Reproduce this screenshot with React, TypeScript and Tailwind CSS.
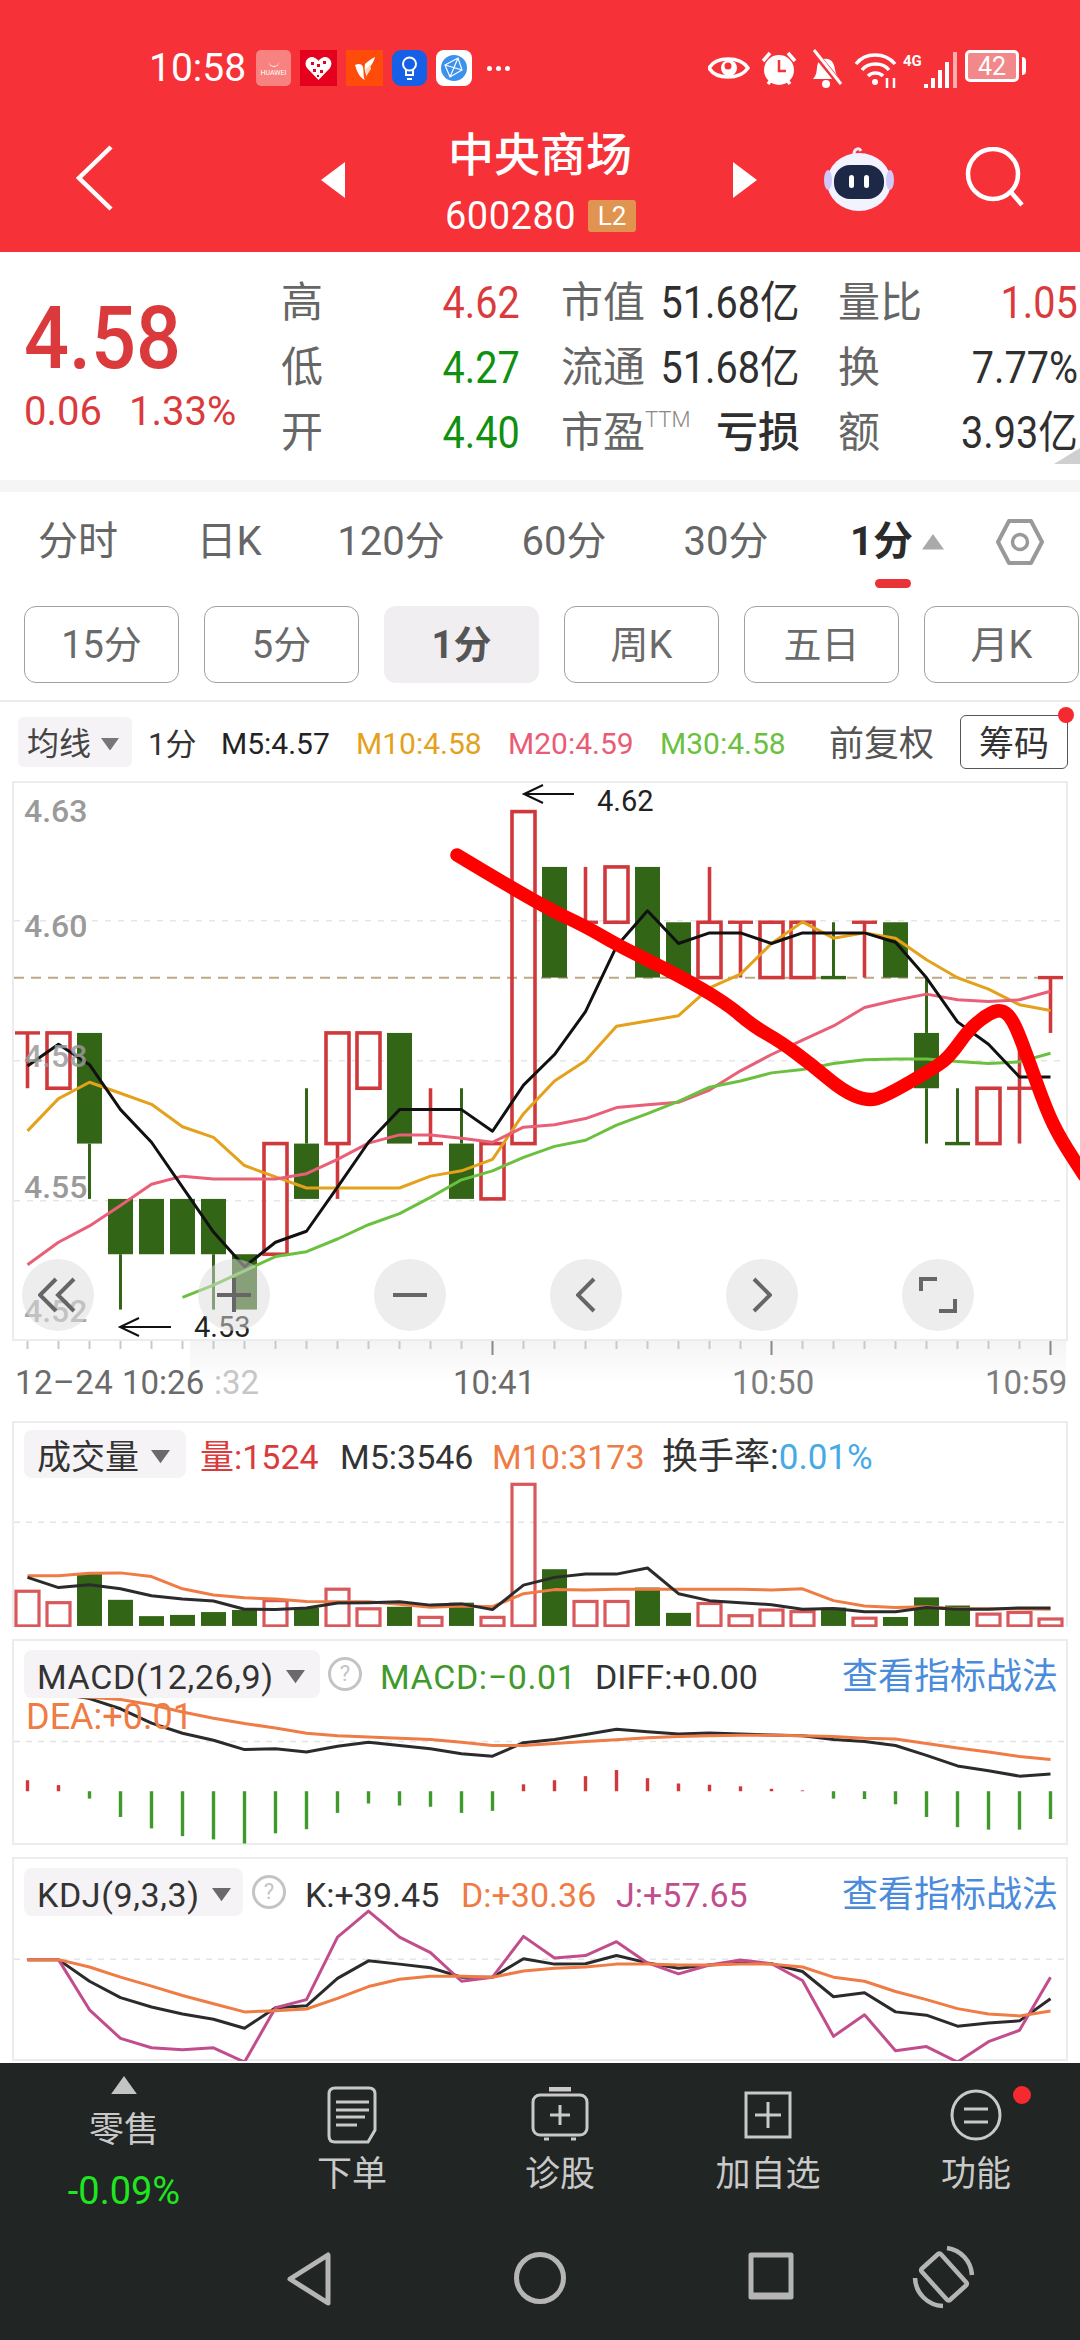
import { ReactNode } from "react";

// candle slots share one x scale across all panels
const slotX = (i: number) => 27.5 + 31 * i;
// values below are read off in "zoom units": screen y = 780 or 1420 + z / 2.45
const MAIN_TOP = 782;
const mainY = (z: number) => 780 + z / 2.45 - MAIN_TOP;
const priceY = (cents: number) => 812.6 + (462 - cents) * 55.33 - MAIN_TOP;

type Candle = [up: boolean, open: number, close: number, low: number, high: number];

const candles: Candle[] = [
  [true, 458, 458, 457, 458],
  [true, 457, 458, 457, 458],
  [false, 458, 456, 455, 458],
  [false, 455, 454, 453, 455],
  [false, 455, 454, 454, 455],
  [false, 455, 454, 454, 455],
  [false, 455, 454, 453, 455],
  [false, 454, 453, 453, 454],
  [true, 454, 456, 454, 456],
  [false, 456, 455, 455, 457],
  [true, 456, 458, 455, 458],
  [true, 457, 458, 457, 458],
  [false, 458, 456, 456, 458],
  [true, 456, 456, 456, 457],
  [false, 456, 455, 455, 457],
  [true, 455, 456, 455, 456],
  [true, 456, 462, 456, 462],
  [false, 461, 459, 459, 461],
  [true, 460, 460, 460, 461],
  [true, 460, 461, 460, 461],
  [false, 461, 459, 459, 461],
  [false, 460, 459, 459, 460],
  [true, 459, 460, 459, 461],
  [true, 460, 460, 459, 460],
  [true, 459, 460, 459, 460],
  [true, 459, 460, 459, 460],
  [false, 459, 459, 459, 460],
  [true, 460, 460, 459, 460],
  [false, 460, 459, 459, 460],
  [false, 458, 457, 456, 459],
  [false, 456, 456, 456, 457],
  [true, 456, 457, 456, 457],
  [true, 457, 457, 456, 458],
  [true, 459, 459, 458, 459],
];

const ma5 = [703, 650, 700, 810, 890, 1000, 1110, 1195, 1135, 1108, 1000, 890, 810, 810, 810, 863, 750, 675, 570, 410, 323, 403, 377, 377, 403, 377, 377, 377, 400, 487, 595, 650, 730, 730];
const ma10 = [862, 783, 743, 770, 797, 852, 878, 947, 975, 1002, 1002, 1002, 1002, 973, 960, 932, 820, 740, 690, 606, 593, 580, 512, 478, 403, 350, 390, 377, 390, 443, 487, 515, 553, 567];
const ma20 = [1190, 1135, 1095, 1045, 993, 973, 980, 980, 980, 967, 932, 892, 872, 872, 880, 890, 853, 847, 832, 805, 798, 792, 762, 715, 675, 640, 605, 560, 542, 527, 541, 545, 541, 520];
const ma30 = [1270, 1240, 1205, 1170, 1158, 1127, 1092, 1065, 1025, 982, 960, 927, 900, 885, 848, 820, 790, 755, 740, 720, 712, 697, 688, 686, 686, 692, 697, 693, 672];

const volTops: [boolean, number][] = [
  [true, 422], [true, 450], [false, 378], [false, 443], [false, 483], [false, 480], [false, 473], [false, 468], [true, 445], [false, 462], [true, 417], [true, 465], [false, 460], [true, 486], [false, 450], [true, 486], [true, 160],
  [false, 368], [true, 447], [true, 447], [false, 413], [false, 475], [true, 452], [true, 482], [true, 468], [true, 472], [false, 462], [true, 488], [false, 485], [false, 437], [false, 457], [true, 478], [true, 474], [true, 490],
];
const volBlack = [388, 413, 406, 416, 433, 441, 446, 466, 467, 463, 451, 450, 448, 456, 453, 467, 407, 388, 380, 380, 365, 428, 445, 450, 455, 466, 464, 472, 472, 462, 466, 466, 463, 463];
const volOrange = [384, 384, 378, 377, 386, 416, 431, 438, 441, 447, 448, 448, 454, 461, 458, 460, 428, 418, 419, 417, 417, 417, 417, 417, 419, 416, 445, 458, 462, 460, 465, 465, 465, 466];

const macdBars = [885, 897, 930, 975, 1003, 1022, 1030, 1040, 1015, 1005, 965, 942, 947, 950, 965, 960, 895, 885, 875, 860, 880, 893, 896, 900, 906, 910, 930, 931, 944, 975, 1000, 1006, 1006, 980];
const diffLine = [672, 672, 685, 710, 745, 770, 787, 810, 808, 816, 802, 792, 800, 808, 820, 826, 793, 785, 773, 760, 766, 772, 769, 772, 774, 776, 785, 790, 800, 824, 850, 862, 875, 870];
const deaLine = [676, 678, 682, 687, 700, 718, 733, 746, 757, 770, 776, 779, 782, 785, 792, 800, 800, 795, 790, 786, 781, 778, 776, 775, 775, 776, 778, 782, 784, 795, 806, 816, 827, 834];

const kLine = [1327, 1327, 1380, 1420, 1443, 1460, 1473, 1495, 1445, 1440, 1373, 1330, 1338, 1347, 1370, 1370, 1325, 1338, 1337, 1317, 1335, 1348, 1340, 1335, 1337, 1356, 1418, 1408, 1455, 1463, 1490, 1482, 1477, 1423];
const dLine = [1327, 1327, 1345, 1370, 1392, 1415, 1435, 1455, 1452, 1448, 1422, 1393, 1375, 1368, 1368, 1370, 1355, 1348, 1345, 1338, 1338, 1340, 1340, 1338, 1338, 1345, 1370, 1380, 1405, 1425, 1447, 1460, 1465, 1453];
const jLine = [1327, 1327, 1450, 1520, 1543, 1548, 1543, 1578, 1445, 1425, 1272, 1208, 1272, 1310, 1380, 1370, 1270, 1323, 1317, 1283, 1335, 1362, 1340, 1328, 1337, 1378, 1515, 1462, 1550, 1540, 1578, 1528, 1500, 1370];

// hand-drawn red stroke on top of the chart, in page coordinates
const scribble: [number, number][] = [
  [457, 856], [540, 906], [585, 927], [619, 947], [678, 976], [726, 1004], [753, 1027], [781, 1043], [812, 1066], [843, 1092], [867, 1102], [884, 1098], [936, 1068], [950, 1057], [970, 1029], [991, 1013], [1003, 1011], [1013, 1021], [1025, 1051], [1046, 1110], [1060, 1139], [1084, 1176],
];

function smoothPath(pts: [number, number][]) {
  let d = `M${pts[0][0]} ${pts[0][1]}`;
  for (let i = 1; i < pts.length - 1; i++) {
    const mx = (pts[i][0] + pts[i + 1][0]) / 2;
    const my = (pts[i][1] + pts[i + 1][1]) / 2;
    d += ` Q${pts[i][0]} ${pts[i][1]} ${mx} ${my}`;
  }
  const last = pts[pts.length - 1];
  return `${d} L${last[0]} ${last[1]}`;
}

function Line({ values, toY, color, start = 0, width = 3 }: { values: number[]; toY: (z: number) => number; color: string; start?: number; width?: number }) {
  const points = values.map((v, i) => `${slotX(i + start)},${toY(v)}`).join(" ");
  return <polyline points={points} fill="none" stroke={color} strokeWidth={width} strokeLinejoin="round" />;
}

function Caret({ up, size = 18, color = "#777" }: { up?: boolean; size?: number; color?: string }) {
  return (
    <svg width={size} height={size * 0.7} viewBox="0 0 10 7" className="shrink-0">
      <path d={up ? "M5 0L10 7H0Z" : "M0 0H10L5 7Z"} fill={color} />
    </svg>
  );
}

function StatusBar() {
  return (
    <div className="flex h-[124px] items-center pt-[12px] text-white">
      <span className="ml-[149px] w-[107px] text-[39px] leading-none">10:58</span>
      <div className="flex items-center gap-[9px]">
        <div className="flex h-[36px] w-[35px] flex-col items-center justify-center rounded-[5px] bg-[#f8827f]">
          <span className="h-[10px] w-[10px] rounded-b-full border-b border-white" />
          <span className="text-[7px] leading-[12px]">HUAWEI</span>
        </div>
        <svg width="37" height="36" viewBox="0 0 37 36">
          <rect width="37" height="36" fill="#e5001e" />
          <path d="M18.5 30L7 18C3 12 8 6 13 7C16 8 18 10 18.5 11C19 10 21 8 24 7C29 6 34 12 30 18Z" fill="#fff" />
          <path d="M11 12h3v3h-3zM17 14h3v3h-3zM23 11h3v3h-3zM13 19h3v3h-3zM20 20h3v3h-3zM17 25h2v2h-2z" fill="#e5001e" />
        </svg>
        <svg width="37" height="36" viewBox="0 0 37 36">
          <rect width="37" height="36" fill="#ff4c0b" />
          <path d="M9 15C13 13 16 14 17 17C18 22 17 27 19 30C14 28 11 22 9 15ZM19 14C22 11 25 9 29 7C28 11 26 15 22 19C21 22 21 25 21 27C19 23 18 18 19 14Z" fill="#fff" />
          <path d="M19 20L24 15L25 19L21 25Z" fill="#ffd9b8" />
        </svg>
        <svg width="35" height="36" viewBox="0 0 35 36">
          <rect width="35" height="36" rx="9" fill="#1560e6" />
          <circle cx="17.5" cy="14" r="6.5" fill="none" stroke="#fff" strokeWidth="2" />
          <path d="M14 20v5h7v-5M15 29h5" fill="none" stroke="#fff" strokeWidth="2" />
        </svg>
        <svg width="36" height="36" viewBox="0 0 36 36">
          <rect width="36" height="36" rx="8" fill="#fff" />
          <circle cx="18" cy="18" r="13" fill="#3b91ee" />
          <path d="M9 15L22 8L26 20L14 27Z M9 15L26 20 M22 8L14 27" fill="none" stroke="#fff" strokeWidth="1.2" />
        </svg>
      </div>
      <span className="ml-[15px] flex gap-[4px]">
        <i className="h-[5px] w-[5px] rounded-full bg-white" />
        <i className="h-[5px] w-[5px] rounded-full bg-white" />
        <i className="h-[5px] w-[5px] rounded-full bg-white" />
      </span>
      <div className="ml-auto flex items-center">
        <svg width="322" height="44" viewBox="0 0 322 44" className="mr-[50px]">
          {/* eye */}
          <path d="M1 22C8 10 32 10 40 22C32 34 8 34 1 22Z" fill="none" stroke="#fff" strokeWidth="3.5" />
          <circle cx="21" cy="22" r="8" fill="#fff" />
          <circle cx="20" cy="20" r="3.5" fill="#f63138" />
          {/* alarm */}
          <circle cx="71" cy="24" r="15" fill="#fff" />
          <path d="M71 14v11h7" fill="none" stroke="#f63138" strokeWidth="2.5" />
          <path d="M55 15L62 7M87 15L80 7M60 38l3-4M82 38l-3-4" stroke="#fff" strokeWidth="3.5" />
          {/* muted bell */}
          <path d="M105 33C110 28 108 22 110 17C112 12 122 11 125 17C128 22 126 28 132 33Z" fill="#fff" />
          <circle cx="118" cy="38" r="4" fill="#fff" />
          <path d="M106 6L133 39" stroke="#f63138" strokeWidth="6" />
          <path d="M106 4L133 38" stroke="#fff" strokeWidth="3" />
          {/* wifi */}
          <path d="M148 18C157 6 177 6 187 18M154 24C160 16 175 16 181 24M160 30C164 26 171 26 175 30" fill="none" stroke="#fff" strokeWidth="3.5" />
          <circle cx="167" cy="36" r="3" fill="#fff" />
          <path d="M179 32v10M186 32v10" stroke="#fff" strokeWidth="2.5" />
          {/* signal */}
          <path d="M216 38h4v4h-4zM223 32h4v10h-4zM230 24h4v18h-4zM237 16h4v26h-4z" fill="#fff" />
          <path d="M245 6h4v36h-4z" fill="#ffffff" opacity=".6" />
          <text x="195" y="20" fontSize="15" fontWeight="700" fill="#fff">4G</text>
        </svg>
        <div className="absolute left-[965px] top-[50px] flex items-center">
          <span className="flex h-[32px] w-[54px] items-center justify-center rounded-[5px] border-[3px] border-white bg-[#f3888b] text-[25px] leading-none">42</span>
          <span className="ml-[3px] h-[18px] w-[4px] rounded-r bg-white" />
        </div>
      </div>
    </div>
  );
}

function Robot() {
  return (
    <svg width="74" height="68" viewBox="0 0 74 68">
      <path d="M32 10C32 5 37 3 39 7" fill="none" stroke="#e9e6fb" strokeWidth="3" />
      <ellipse cx="37" cy="38" rx="32" ry="29" fill="#f3f2ff" />
      <ellipse cx="6" cy="36" rx="4" ry="10" fill="#cfc8f8" />
      <ellipse cx="68" cy="36" rx="4" ry="10" fill="#cfc8f8" />
      <rect x="12" y="21" width="50" height="34" rx="16" fill="#1c2846" />
      <rect x="27" y="31" width="5" height="13" rx="2.5" fill="#fff" />
      <rect x="42" y="31" width="5" height="13" rx="2.5" fill="#fff" />
    </svg>
  );
}

function Header() {
  return (
    <header className="relative h-[252px] shrink-0 bg-[#f63138] text-white">
      <StatusBar />
      <div className="relative flex h-[128px] items-center pb-[20px]">
        <svg width="38" height="66" viewBox="0 0 38 66" className="ml-[76px]">
          <path d="M35 2L3 33L35 64" fill="none" stroke="#fff" strokeWidth="4.5" />
        </svg>
        <svg width="24" height="36" viewBox="0 0 24 36" className="mt-[4px] ml-[207px]">
          <path d="M24 0V36L0 18Z" fill="#fff" />
        </svg>
        <div className="mt-[7px] ml-[100px] flex w-[195px] flex-col items-start">
          <span className="ml-[3px] text-[46px] leading-[60px] font-medium">中央商场</span>
          <div className="mt-[9px] flex items-center">
            <span className="text-[38px] leading-[44px] tracking-[0.5px]">600280</span>
            <span className="ml-[12px] flex h-[32px] w-[48px] items-center justify-center rounded-[3px] bg-[#e19450] text-[26px] leading-none">L2</span>
          </div>
        </div>
        <svg width="24" height="36" viewBox="0 0 24 36" className="mt-[4px] ml-[93px]">
          <path d="M0 0V36L24 18Z" fill="#fff" />
        </svg>
        <div className="ml-[65px]">
          <Robot />
        </div>
        <svg width="62" height="62" viewBox="0 0 62 62" className="ml-[68px]">
          <circle cx="29" cy="27" r="25" fill="none" stroke="#fff" strokeWidth="4.5" />
          <path d="M46 44L58 58" stroke="#fff" strokeWidth="4.5" />
        </svg>
      </div>
    </header>
  );
}

const RED = "text-[#db3a3d]";
const GREEN = "text-[#10900f]";
// the app's digits are taller and narrower than Roboto, so squeeze them a little
const NUM = "origin-right scale-x-[.9] text-[44px]";

function Stat({ label, value, width, labelExtra, valueClass }: { label: string; value: string; width: string; labelExtra?: ReactNode; valueClass: string }) {
  return (
    <div className={`flex items-center justify-between ${width}`}>
      <span className="flex text-[42px] leading-none text-[#666]">
        {label}
        {labelExtra}
      </span>
      <span className={`leading-none ${valueClass}`}>{value}</span>
    </div>
  );
}

function Quote() {
  const dark = "text-[#2f2f2f]";
  return (
    <section className="relative flex h-[228px] shrink-0 pt-[18px]">
      <div className="flex w-[281px] flex-col pl-[24px]">
        <span className={`mt-[23px] origin-left scale-x-[.9] text-[88px] leading-[90px] font-medium ${RED}`}>4.58</span>
        <div className={`mt-[7px] flex text-[40px] leading-[44px] ${RED}`}>
          <span className="w-[105px]">0.06</span>
          <span>1.33%</span>
        </div>
      </div>
      <div className="flex flex-col">
        {[
          [
            ["高", "4.62", `${RED} ${NUM}`],
            ["市值", "51.68亿", `${dark} ${NUM}`],
            ["量比", "1.05", `${RED} ${NUM}`],
          ],
          [
            ["低", "4.27", `${GREEN} ${NUM}`],
            ["流通", "51.68亿", `${dark} ${NUM}`],
            ["换", "7.77%", `${dark} ${NUM}`],
          ],
          [
            ["开", "4.40", `${GREEN} ${NUM}`],
            ["市盈", "亏损", `${dark} text-[42px] font-medium`],
            ["额", "3.93亿", `${dark} ${NUM}`],
          ],
        ].map((row, r) => (
          <div key={r} className="flex h-[65px] items-center">
            <Stat label={row[0][0]} value={row[0][1]} valueClass={row[0][2]} width="w-[239px]" />
            <div className="ml-[41px]">
              <Stat
                label={row[1][0]}
                value={row[1][1]}
                valueClass={row[1][2]}
                width="w-[239px]"
                labelExtra={r === 2 ? <span className="mt-[-3px] text-[22px] font-light text-[#888]">TTM</span> : undefined}
              />
            </div>
            <div className="ml-[38px]">
              <Stat label={row[2][0]} value={row[2][1]} valueClass={row[2][2]} width="w-[240px]" />
            </div>
          </div>
        ))}
      </div>
      <svg width="26" height="16" viewBox="0 0 26 16" className="absolute right-0 bottom-[16px]">
        <path d="M26 0V16H0Z" fill="#cfcfcf" />
      </svg>
    </section>
  );
}

function Tabs() {
  const items = [
    ["分时", "w-[156px]"],
    ["日K", "w-[146px]"],
    ["120分", "w-[178px]"],
    ["60分", "w-[168px]"],
    ["30分", "w-[156px]"],
  ];
  return (
    <nav className="relative flex h-[114px] shrink-0 items-center pb-[14px] text-[40px] leading-none text-[#666]">
      {items.map(([t, w]) => (
        <span key={t} className={`${w} text-center`}>
          {t}
        </span>
      ))}
      <span className="ml-[46px] w-[64px] font-bold whitespace-nowrap text-[#2b2b2b]">1分</span>
      <span className="ml-[8px]">
        <Caret up size={22} color="#aaa" />
      </span>
      <svg width="48" height="46" viewBox="0 0 48 46" className="ml-[52px]">
        <path d="M13 2H35L46 23L35 44H13L2 23Z" fill="none" stroke="#999" strokeWidth="4" strokeLinejoin="round" />
        <circle cx="24" cy="23" r="7.5" fill="none" stroke="#999" strokeWidth="3.5" />
      </svg>
      <span className="absolute top-[87px] left-[875px] h-[9px] w-[36px] rounded-full bg-[#e83437]" />
    </nav>
  );
}

function SubTabs() {
  const items = ["15分", "5分", "1分", "周K", "五日", "月K"];
  return (
    <div className="flex h-[96px] shrink-0 gap-[25px] border-b-2 border-[#ececec] pl-[24px]">
      {items.map((t, i) => (
        <span
          key={t}
          className={`flex h-[77px] w-[155px] shrink-0 items-center justify-center rounded-[12px] text-[38px] leading-none ${
            i === 2 ? "bg-[#f0eef0] font-bold text-[#555]" : "border border-[#a0a0a0] text-[#6a6a6a]"
          }`}
        >
          {t}
        </span>
      ))}
    </div>
  );
}

function IndicatorRow() {
  return (
    <div className="relative flex h-[79px] shrink-0 items-center pl-[18px] text-[30px] leading-none [&>span]:pt-[5px]">
      <span className="flex h-[50px] w-[114px] items-center rounded-[6px] bg-[#f6f3f6] pl-[9px] text-[32px] text-[#444]">
        均线
        <span className="ml-[10px]">
          <Caret size={18} />
        </span>
      </span>
      <span className="ml-[16px] w-[73px] text-[31px] text-[#333]">1分</span>
      <span className="w-[135px] text-[#222]">M5:4.57</span>
      <span className="w-[152px] text-[#e3a11c]">M10:4.58</span>
      <span className="w-[152px] text-[#ea5b76]">M20:4.59</span>
      <span className="w-[169px] text-[#6cc040]">M30:4.58</span>
      <span className="w-[131px] text-[35px] text-[#555]">前复权</span>
      <span className="relative flex h-[54px] w-[108px] items-center justify-center rounded-[6px] border border-[#555] text-[35px] text-[#333]">
        筹码
        <i className="absolute -top-[9px] -right-[7px] h-[16px] w-[16px] rounded-full bg-[#f52a30]" />
      </span>
    </div>
  );
}

function CandleMark({ c, i }: { c: Candle; i: number }) {
  const [up, open, close, low, high] = c;
  const x = slotX(i);
  const top = priceY(Math.max(open, close));
  const bot = priceY(Math.min(open, close));
  const color = up ? "#d0393c" : "#336516";
  const stroke = up ? 3.6 : 3;
  return (
    <g>
      {high > Math.max(open, close) && <line x1={x} x2={x} y1={priceY(high)} y2={top} stroke={color} strokeWidth={stroke} />}
      {low < Math.min(open, close) && <line x1={x} x2={x} y1={bot} y2={priceY(low)} stroke={color} strokeWidth={stroke} />}
      {open === close ? (
        <line x1={x - 12.5} x2={x + 12.5} y1={top} y2={top} stroke={color} strokeWidth={3.4} />
      ) : up ? (
        <rect x={x - 11.5} y={top} width={23} height={bot - top} fill="none" stroke={color} strokeWidth={3.6} />
      ) : (
        <rect x={x - 12.5} y={top} width={25} height={bot - top} fill={color} />
      )}
    </g>
  );
}

function Arrow({ x, y, x2 }: { x: number; y: number; x2: number }) {
  return <path d={`M${x2} ${y}H${x}M${x + 19} ${y - 9}L${x} ${y}L${x + 19} ${y + 9}`} fill="none" stroke="#111" strokeWidth="2" />;
}

const overlayBtn = "flex h-[72px] w-[72px] items-center justify-center rounded-full bg-[#dcdcdc]/50";
const btnIcon = { fill: "none", stroke: "#666", strokeWidth: 4 } as const;

function MainChart() {
  const axis = [
    ["4.63", 812],
    ["4.60", 927],
    ["4.58", 1057],
    ["4.55", 1188],
    ["4.52", 1312],
  ] as const;
  return (
    <section className="relative ml-[12px] h-[560px] w-[1056px] shrink-0 overflow-visible border-2 border-[#ececec]">
      <svg width="1080" height="560" className="absolute -top-[2px] -left-[14px] overflow-visible">
        {[347, 690, 1033].map((z) => (
          <line key={z} x1="14" x2="1066" y1={mainY(z)} y2={mainY(z)} stroke="#e6e6e6" strokeWidth="1.5" strokeDasharray="6 7" />
        ))}
        <line x1="14" x2="1066" y1={mainY(487)} y2={mainY(487)} stroke="#bda982" strokeWidth="2" strokeDasharray="10 7" />
        {candles.map((c, i) => (
          <CandleMark key={i} c={c} i={i} />
        ))}
        <Line values={ma10} toY={mainY} color="#e3a11c" />
        <Line values={ma20} toY={mainY} color="#ea5f78" />
        <Line values={ma30} toY={mainY} color="#6cc040" start={5} />
        <Line values={ma5} toY={mainY} color="#111" />
        <path d={smoothPath(scribble.map(([x, y]) => [x, y - MAIN_TOP]))} fill="none" stroke="#ff0000" strokeWidth="13.5" strokeLinecap="round" strokeLinejoin="round" />
        {axis.map(([t, y]) => (
          <text key={t} x="24" y={y - MAIN_TOP + 11} fontSize="32" fontWeight="500" fill="#9a9a9a" fillOpacity={t === "4.58" || t === "4.52" ? 0.85 : 1}>
            {t}
          </text>
        ))}
        <Arrow x={120} x2={171} y={1328 - MAIN_TOP} />
        <text x="194" y={1338 - MAIN_TOP} fontSize="29" fill="#222">4.53</text>
        <Arrow x={524} x2={574} y={795 - MAIN_TOP} />
        <text x="597" y={812 - MAIN_TOP} fontSize="29" fill="#222">4.62</text>
      </svg>
      <div className="absolute top-[476px] left-[8px] flex w-[952px] justify-between">
        <span className={overlayBtn}>
          <svg width="40" height="36" viewBox="0 0 40 36" {...btnIcon}>
            <path d="M18 2L2 18L18 34M36 2L20 18L36 34" />
          </svg>
        </span>
        <span className={overlayBtn}>
          <svg width="34" height="34" viewBox="0 0 34 34" {...btnIcon}>
            <path d="M0 17H34M17 0V34" />
          </svg>
        </span>
        <span className={overlayBtn}>
          <svg width="34" height="6" viewBox="0 0 34 6" {...btnIcon}>
            <path d="M0 3H34" />
          </svg>
        </span>
        <span className={overlayBtn}>
          <svg width="20" height="36" viewBox="0 0 20 36" {...btnIcon}>
            <path d="M18 2L2 18L18 34" />
          </svg>
        </span>
        <span className={overlayBtn}>
          <svg width="20" height="36" viewBox="0 0 20 36" {...btnIcon}>
            <path d="M2 2L18 18L2 34" />
          </svg>
        </span>
        <span className={overlayBtn}>
          <svg width="38" height="36" viewBox="0 0 38 36" {...btnIcon}>
            <path d="M2 14V2H18M36 22V34H20" />
          </svg>
        </span>
      </div>
    </section>
  );
}

function TimeAxis() {
  return (
    <div className="relative h-[80px] shrink-0 overflow-hidden">
      <div className="absolute top-0 right-[14px] left-[190px] h-[42px] bg-linear-to-b from-[#f4f4f4] to-white" />
      <svg width="1080" height="16" className="absolute top-0 left-0">
        {candles.map((_, i) => (
          <line
            key={i}
            x1={slotX(i)}
            x2={slotX(i)}
            y1="0"
            y2={i === 15 || i === 24 || i === 33 ? 14 : 8}
            stroke={i === 15 || i === 24 || i === 33 ? "#888" : "#c9c9c9"}
            strokeWidth="2"
          />
        ))}
      </svg>
      <div className="relative flex pt-[24px] text-[33px] leading-[36px] text-[#6b6b6b]">
        <span className="ml-[15px] w-[107px] tracking-[0.5px] whitespace-nowrap">12–24</span>
        <span className="w-[92px]">10:26</span>
        <span className="w-[239px] text-[#c6c6c6]">:32</span>
        <span className="w-[279px]">10:41</span>
        <span className="w-[253px] text-[#7d7d7d]">10:50</span>
        <span className="text-[#7d7d7d]">10:59</span>
      </div>
    </div>
  );
}

function Pill({ label, w }: { label: string; w: string }) {
  return (
    <span className={`flex h-[48px] shrink-0 items-center rounded-[8px] bg-[#f6f3f6] pt-[6px] pl-[13px] text-[#333] ${w}`}>
      {label}
      <span className="ml-[12px]">
        <Caret size={19} color="#6a6a6a" />
      </span>
    </span>
  );
}

function Help() {
  return (
    <span className="flex h-[34px] w-[34px] shrink-0 items-center justify-center rounded-full border-[3px] border-[#c4c4c4] text-[22px] text-[#c4c4c4]">?</span>
  );
}

function VolumePanel() {
  const top = 1422;
  const y = (z: number) => 1420 + z / 2.45 - top;
  const base = y(507);
  return (
    <section className="relative ml-[12px] h-[206px] w-[1056px] shrink-0 border-x-2 border-t-2 border-[#ececec]">
      <svg width="1080" height="206" className="absolute -top-[2px] -left-[14px]">
        <line x1="14" x2="1066" y1={y(253)} y2={y(253)} stroke="#e4e4e4" strokeWidth="1.5" strokeDasharray="6 6" />
        {volTops.map(([up, z], i) =>
          up ? (
            <rect key={i} x={slotX(i) - 11.5} y={y(z)} width="23" height={base - y(z)} fill="none" stroke="#d9585b" strokeWidth="3.2" />
          ) : (
            <rect key={i} x={slotX(i) - 12.5} y={y(z)} width="25" height={base - y(z)} fill="#336516" />
          ),
        )}
        <Line values={volOrange} toY={y} color="#ef7b45" />
        <Line values={volBlack} toY={y} color="#2b2b2b" />
      </svg>
      <div className="absolute top-[7px] left-[10px] flex items-center text-[34px] leading-none whitespace-nowrap [&>span]:pt-[6px]">
        <Pill label="成交量" w="w-[162px]" />
        <span className="ml-[14px] w-[140px] text-[#db3a3d]">量:1524</span>
        <span className="w-[152px] text-[#333]">M5:3546</span>
        <span className="w-[170px] text-[#ef7b45]">M10:3173</span>
        <span className="text-[36px] text-[#333]">换手率:</span>
        <span className="text-[35px] text-[#47a9e6]">0.01%</span>
      </div>
    </section>
  );
}

function MacdPanel() {
  const top = 1640;
  const y = (z: number) => 1420 + z / 2.45 - top;
  return (
    <section className="relative mt-[12px] ml-[12px] h-[206px] w-[1056px] shrink-0 border-2 border-[#ececec]">
      <svg width="1080" height="206" className="absolute -top-[2px] -left-[14px]">
        <line x1="14" x2="1066" y1={y(790)} y2={y(790)} stroke="#e4e4e4" strokeWidth="1.5" strokeDasharray="6 6" />
        {macdBars.map((z, i) => (
          <rect key={i} x={slotX(i) - 1.7} y={y(Math.min(z, 912))} width="3.4" height={Math.abs(y(z) - y(912))} fill={z < 912 ? "#d0393c" : "#3f9a2b"} />
        ))}
        <Line values={diffLine} toY={y} color="#2b2b2b" />
        <Line values={deaLine} toY={y} color="#ef7b45" />
      </svg>
      <div className="absolute top-[9px] left-[10px] flex w-[1034px] items-center text-[34px] leading-none whitespace-nowrap [&>span]:pt-[6px]">
        <span className="shrink-0 !pt-0 tracking-[0.6px]">
          <Pill label="MACD(12,26,9)" w="w-[296px]" />
        </span>
        <span className="ml-[8px] !pt-0">
          <Help />
        </span>
        <span className="ml-[18px] w-[215px] tracking-[0.6px] text-[#3f9a2b]">MACD:−0.01</span>
        <span className="text-[#333]">DIFF:+0.00</span>
        <span className="ml-auto text-[36px] text-[#4a8bdb]">查看指标战法</span>
      </div>
      <span className="absolute top-[58px] left-[12px] text-[36px] leading-none text-[#ef7b45]">DEA:+0.01</span>
    </section>
  );
}

function KdjPanel() {
  const top = 1859;
  const y = (z: number) => 1420 + z / 2.45 - top;
  return (
    <section className="relative mt-[12px] ml-[12px] h-[204px] w-[1056px] shrink-0 border-2 border-[#ececec]">
      <svg width="1080" height="204" className="absolute -top-[2px] -left-[14px]">
        <line x1="14" x2="1066" y1={y(1326)} y2={y(1326)} stroke="#e4e4e4" strokeWidth="1.5" strokeDasharray="6 6" />
        <Line values={kLine} toY={y} color="#2b2b2b" />
        <Line values={jLine} toY={y} color="#c24d8d" />
        <Line values={dLine} toY={y} color="#ef7b45" />
      </svg>
      <div className="absolute top-[9px] left-[10px] flex w-[1034px] items-center text-[34px] leading-none whitespace-nowrap [&>span]:pt-[6px]">
        <span className="shrink-0 !pt-0 tracking-[0.6px]">
          <Pill label="KDJ(9,3,3)" w="w-[219px]" />
        </span>
        <span className="ml-[9px] !pt-0">
          <Help />
        </span>
        <span className="ml-[19px] w-[156px] text-[#333]">K:+39.45</span>
        <span className="w-[155px] text-[#ef7b45]">D:+30.36</span>
        <span className="text-[#c24d8d]">J:+57.65</span>
        <span className="ml-auto text-[36px] text-[#4a8bdb]">查看指标战法</span>
      </div>
    </section>
  );
}

function NavAction({ label, children }: { label: string; children: ReactNode }) {
  return (
    <div className="flex w-[208px] flex-col items-center pt-[7px]">
      <div className="flex h-[64px] items-center">{children}</div>
      <span className="mt-[6px] text-[35px] leading-[44px] text-[#c9c9c9]">{label}</span>
    </div>
  );
}

function BottomBar() {
  const s = { fill: "none", stroke: "#c9c9c9", strokeWidth: 3 } as const;
  const nav = { fill: "none", stroke: "#b5b5b5", strokeWidth: 5, strokeLinejoin: "round" } as const;
  return (
    <footer className="mt-[2px] flex flex-1 flex-col bg-[#212523]">
      <div className="flex h-[175px] pt-[13px]">
        <div className="flex w-[248px] flex-col items-center">
          <Caret up size={26} color="#c4c4c4" />
          <span className="mt-[15px] text-[35px] leading-[44px] text-[#c9c9c9]">零售</span>
          <span className="mt-[16px] text-[38px] leading-[44px] text-[#1fe61f]">-0.09%</span>
        </div>
        <div className="flex items-start">
          <NavAction label="下单">
            <svg width="50" height="58" viewBox="0 0 50 58" {...s}>
              <path d="M8 2H42C46 2 48 4 48 8V44L41 56H8C4 56 2 54 2 50V8C2 4 4 2 8 2Z" />
              <path d="M9 16H42M9 24H42M9 31H38M9 39H30" />
            </svg>
          </NavAction>
          <NavAction label="诊股">
            <svg width="58" height="56" viewBox="0 0 58 56" {...s}>
              <path d="M18 2H40" strokeWidth="5" />
              <rect x="2" y="8" width="54" height="40" rx="7" />
              <path d="M29 18V38M19 28H39M13 52H18M40 52H45" />
            </svg>
          </NavAction>
          <NavAction label="加自选">
            <svg width="48" height="48" viewBox="0 0 48 48" {...s}>
              <rect x="2" y="2" width="44" height="44" />
              <path d="M24 11V37M11 24H37" />
            </svg>
          </NavAction>
          <div className="relative">
            <NavAction label="功能">
              <svg width="52" height="52" viewBox="0 0 52 52" {...s}>
                <circle cx="26" cy="26" r="24" />
                <path d="M14 20H38M14 33H38" />
              </svg>
            </NavAction>
            <i className="absolute top-[10px] left-[141px] h-[18px] w-[18px] rounded-full bg-[#f52a30]" />
          </div>
        </div>
      </div>
      <div className="flex h-[100px] items-start pt-[14px]">
        <svg width="44" height="54" viewBox="0 0 44 54" className="ml-[287px]" {...nav}>
          <path d="M41 3V51L3 27Z" />
        </svg>
        <svg width="52" height="52" viewBox="0 0 52 52" className="ml-[183px]" {...nav}>
          <circle cx="26" cy="26" r="23.5" />
        </svg>
        <svg width="46" height="48" viewBox="0 0 46 48" className="ml-[182px]" {...nav}>
          <rect x="3" y="3" width="40" height="42" />
          <path d="M3 43H43" />
        </svg>
        <svg width="64" height="64" viewBox="0 0 64 64" className="-mt-[7px] ml-[118px]" fill="none" stroke="#b5b5b5" strokeWidth="4.5">
          <rect x="19" y="11" width="26" height="42" rx="2" transform="rotate(-42 32 32)" />
          <path d="M35 3A29 29 0 0 1 60 30M3 33A29 29 0 0 0 31 61" />
        </svg>
      </div>
    </footer>
  );
}

export default function App() {
  return (
    <div className="flex h-[2340px] w-[1080px] flex-col overflow-hidden bg-white [font-family:Roboto,'Noto_Sans_CJK_SC',sans-serif]">
      <Header />
      <Quote />
      <div className="h-[12px] shrink-0 bg-[#f5f5f5]" />
      <Tabs />
      <SubTabs />
      <IndicatorRow />
      <MainChart />
      <TimeAxis />
      <VolumePanel />
      <MacdPanel />
      <KdjPanel />
      <BottomBar />
    </div>
  );
}
